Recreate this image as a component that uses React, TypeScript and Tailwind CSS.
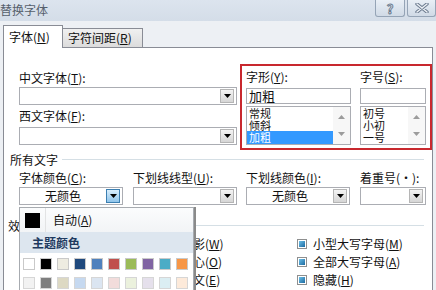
import React from "react";

const font = "font-['Noto_Sans_CJK_SC','Noto_Sans',sans-serif]";

function Arrow({ up = false, color = "#000" }: { up?: boolean; color?: string }) {
  return (
    <svg width="7" height="4" viewBox="0 0 7 4">
      <path d={up ? "M0 4 L3.5 0 L7 4 Z" : "M0 0 L7 0 L3.5 4 Z"} fill={color} />
    </svg>
  );
}

function Combo({ w, text, hot = false }: { w: string; text?: string; hot?: boolean }) {
  return (
    <div className={`${w} h-[18px] border border-[#abadb3] bg-white flex items-center`}>
      <div className="flex-1 text-center text-[12px] leading-[16px] text-[#111]">{text}</div>
      <div
        className={`w-[14px] h-[14px] mr-[2px] flex items-center justify-center border ${
          hot
            ? "border-[#3c7fb1] bg-gradient-to-b from-[#d9eefc] to-[#8fc4ea]"
            : "border-[#b5b5b5] bg-gradient-to-b from-[#f4f4f4] to-[#d6d6d6]"
        }`}
      >
        <Arrow />
      </div>
    </div>
  );
}

function ListBox({ items, selected, w }: { items: string[]; selected?: number; w: string }) {
  return (
    <div className={`${w} h-[39px] border border-[#abadb3] bg-white flex`}>
      <div className="flex-1">
        {items.map((it, i) =>
          i === selected ? (
            <div key={it} className="h-[13px] leading-[13px] text-[11px] pl-[2px] bg-[#3399ff] text-white">
              {it}
            </div>
          ) : (
            <div key={it} className="h-[12px] leading-[12px] text-[11px] pl-[2px] text-[#111]">
              {it}
            </div>
          )
        )}
      </div>
      <div className="w-[17px] flex flex-col items-center justify-between py-[8px] bg-[#f7f7f7]">
        <Arrow up color="#9c9c9c" />
        <Arrow color="#9c9c9c" />
      </div>
    </div>
  );
}

function Check({ label }: { label: React.ReactNode }) {
  return (
    <div className="h-[18px] flex items-center gap-[6px] text-[12px] text-[#111]">
      <div className="w-[10px] h-[10px] border border-[#8e8f8f] bg-white p-[1px]">
        <div className="w-full h-full bg-gradient-to-br from-[#6cc0e8] to-[#1a6aa0]" />
      </div>
      <span>{label}</span>
    </div>
  );
}

const row1 = ["#ffffff", "#000000", "#eeece1", "#1f497d", "#4f81bd", "#c0504d", "#9bbb59", "#8064a2", "#4bacc6", "#f79646"];
const row2 = ["#f2f2f2", "#7f7f7f", "#ddd9c3", "#c6d9f0", "#dbe5f1", "#f2dcdb", "#ebf1dd", "#e5e0ec", "#dbeef3", "#fdeada"];

export default function App() {
  return (
    <div className={`relative w-[436px] h-[290px] overflow-hidden bg-[#edf0f4] ${font} text-[12px] text-[#111]`}>
      {/* Title bar */}
      <div className="h-[21px] flex items-start justify-between bg-gradient-to-b from-[#dce4ee] to-[#d4dde8]">
        <span className="text-[12px] leading-[20px] text-[#56606c]">替换字体</span>
        <div className="flex gap-[2px]">
          <div className="w-[30px] h-[17px] rounded-b-[3px] border border-t-0 border-[#95a4b6] bg-gradient-to-b from-[#e9eff6] to-[#d0dae6] flex items-center justify-center">
            <span className="text-[13px] font-bold leading-none text-[#eef2f7] [-webkit-text-stroke:1px_#6d7c90]">?</span>
          </div>
          <div className="w-[29px] h-[17px] rounded-b-[3px] border border-t-0 border-[#95a4b6] bg-gradient-to-b from-[#e9eff6] to-[#d0dae6] flex items-center justify-center">
            <svg width="14" height="10" viewBox="0 0 14 10">
              <path d="M2 1 L12 9 M12 1 L2 9" stroke="#6d7c90" strokeWidth="3.4" strokeLinecap="round" />
              <path d="M2 1 L12 9 M12 1 L2 9" stroke="#eef2f7" strokeWidth="1.4" strokeLinecap="round" />
            </svg>
          </div>
        </div>
      </div>

      {/* Tabs */}
      <div className="h-[26px] flex items-end pl-[3px]">
        <div className="relative z-10 w-[60px] h-[23px] -mb-px bg-white border border-b-0 border-[#898c95] flex items-center pl-[5px] text-[12px]">
          字体(<u>N</u>)
        </div>
        <div className="w-[80px] h-[19px] bg-gradient-to-b from-[#f0f0f0] to-[#dcdcdc] border border-l-0 border-b-0 border-[#898c95] flex items-center pl-[5px] text-[12px]">
          字符间距(<u>R</u>)
        </div>
      </div>

      {/* Panel */}
      <div className="ml-[3px] w-[430px] h-[260px] bg-white border border-[#898c95]">
        <div className="flex pl-[15px] mt-[16px]">
          <div className="w-[218px] pt-[6px]">
            <div className="h-[15px] leading-[15px] mb-[2px]">
              中文字体(<u>T</u>):
            </div>
            <Combo w="w-[218px]" />
            <div className="h-[15px] leading-[15px] mt-[3px] mb-[4px]">
              西文字体(<u>F</u>):
            </div>
            <Combo w="w-[218px]" />
          </div>
          <div className="ml-[3px] w-[194px] h-[86px] border-2 border-[#c8282e] pl-[4px] flex">
            <div className="w-[105px] pt-[3px]">
              <div className="h-[15px] leading-[15px] mb-[4px]">
                字形(<u>Y</u>):
              </div>
              <div className="h-[16px] border border-[#abadb3] bg-white text-[13px] leading-[14px] pl-[2px] mb-[2px]">加粗</div>
              <ListBox w="w-[105px]" items={["常规", "倾斜", "加粗"]} selected={2} />
            </div>
            <div className="ml-[9px] w-[66px] pt-[3px]">
              <div className="h-[15px] leading-[15px] mb-[4px]">
                字号(<u>S</u>):
              </div>
              <div className="h-[16px] border border-[#abadb3] bg-white mb-[2px]" />
              <ListBox w="w-[66px]" items={["初号", "小初", "一号"]} />
            </div>
          </div>
        </div>

        {/* 所有文字 */}
        <div className="flex items-center pl-[6px] pr-[8px] mt-[2px] h-[15px]">
          <span className="leading-[15px]">所有文字</span>
          <div className="flex-1 h-px bg-[#d5dfe5] ml-[4px]" />
        </div>
        <div className="flex pl-[15px] mt-[3px] h-[15px] leading-[15px]">
          <div className="w-[114px]">
            字体颜色(<u>C</u>):
          </div>
          <div className="w-[113px]">
            下划线线型(<u>U</u>):
          </div>
          <div className="w-[114px]">
            下划线颜色(<u>I</u>):
          </div>
          <div>着重号(·):</div>
        </div>
        <div className="flex pl-[15px] mt-[2px]">
          <Combo w="w-[104px]" text="无颜色" hot />
          <div className="ml-[10px]">
            <Combo w="w-[104px]" />
          </div>
          <div className="ml-[9px]">
            <Combo w="w-[104px]" text="无颜色" />
          </div>
          <div className="ml-[10px]">
            <Combo w="w-[66px]" />
          </div>
        </div>

        {/* 效果 */}
        <div className="flex items-center pl-[4px] pr-[8px] mt-[13px] h-[15px]">
          <span className="leading-[15px]">效果</span>
          <div className="flex-1 h-px bg-[#d5dfe5] ml-[4px]" />
        </div>
        <div className="grid grid-cols-[144px_134px_1fr] pl-[15px] mt-[2px]">
          <div />
          <div className="pl-[2px]">
            <Check label={<>阴影(<u>W</u>)</>} />
            <Check label={<>空心(<u>O</u>)</>} />
            <Check label={<>阳文(<u>E</u>)</>} />
          </div>
          <div>
            <Check label={<>小型大写字母(<u>M</u>)</>} />
            <Check label={<>全部大写字母(<u>A</u>)</>} />
            <Check label={<>隐藏(<u>H</u>)</>} />
          </div>
        </div>
      </div>

      {/* Colour dropdown */}
      <div className="absolute left-[19px] top-[207px] w-[175px] h-[90px] bg-white border border-[#a7abb0] shadow-[2px_0_0_#8a8a8a]">
        <div className="h-[24px] flex items-center bg-gradient-to-b from-[#fbfcfd] to-[#f2f4f6]">
          <div className="w-[26px] h-full flex items-center pl-[5px] border-r border-[#e2e3e4]">
            <div className="w-[15px] h-[15px] bg-black" />
          </div>
          <span className="pl-[7px] text-[12px]">
            自动(<u>A</u>)
          </span>
        </div>
        <div className="h-[21px] flex items-center pl-[12px] bg-[#dde6ef] text-[12px] font-bold text-[#1e3a5f]">主题颜色</div>
        <div className="flex gap-[5px] pl-[3px] mt-[5px]">
          {row1.map((c) => (
            <div key={c} className="w-[12px] h-[12px] border border-[#c9c9c9]" style={{ backgroundColor: c }} />
          ))}
        </div>
        <div className="flex gap-[5px] pl-[3px] mt-[7px]">
          {row2.map((c) => (
            <div key={c} className="w-[12px] h-[12px] border border-[#d6d6d6]" style={{ backgroundColor: c }} />
          ))}
        </div>
      </div>
    </div>
  );
}
